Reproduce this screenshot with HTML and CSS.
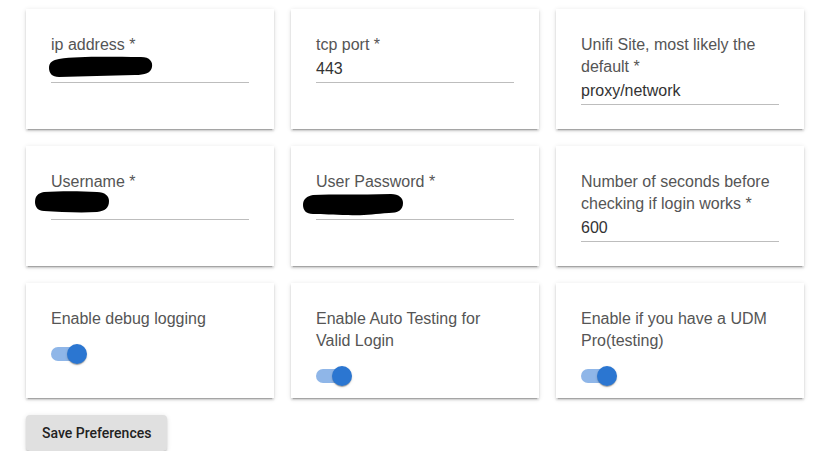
FILE: index.html
```html
<!DOCTYPE html>
<html lang="en">
<head>
  <meta charset="UTF-8">
  <meta name="viewport" content="width=device-width, initial-scale=1.0">
  <title>Preferences</title>
  <link rel="stylesheet" href="styles.css">
</head>
<body>
  <div class="prefs">
    <div class="grid">
      <div class="card">
        <label class="field-label">ip address *</label>
        <div class="field-input">
          <svg class="redact redact-ip" viewBox="0 0 104 23" width="104" height="23">
            <path d="M10 4 C30 1 60 2 92 2 C101 2 104 7 103 12 C102 18 96 20 86 20 C60 21 35 21 10 22 C3 22 0 18 0 13 C0 7 4 5 10 4 Z" fill="#000"/>
          </svg>
        </div>
      </div>
      <div class="card">
        <label class="field-label">tcp port *</label>
        <div class="field-input">443</div>
      </div>
      <div class="card">
        <label class="field-label">Unifi Site, most likely the default *</label>
        <div class="field-input">proxy/network</div>
      </div>

      <div class="card">
        <label class="field-label">Username *</label>
        <div class="field-input">
          <svg class="redact redact-user" viewBox="0 0 74 23" width="74" height="23">
            <path d="M9 2 C25 1 45 1 62 2 C70 2 74 6 74 11 C74 18 70 21 62 22 C45 23 25 22 9 21 C3 21 0 17 0 12 C0 6 3 3 9 2 Z" fill="#000"/>
          </svg>
        </div>
      </div>
      <div class="card">
        <label class="field-label">User Password *</label>
        <div class="field-input">
          <svg class="redact redact-pass" viewBox="0 0 100 23" width="100" height="23">
            <path d="M10 2 C30 1 55 2 88 1 C96 1 100 5 100 10 C100 17 95 20 86 20 C70 21 60 23 45 22 C30 22 20 21 10 21 C3 21 0 17 0 12 C0 6 4 3 10 2 Z" fill="#000"/>
          </svg>
        </div>
      </div>
      <div class="card">
        <label class="field-label">Number of seconds before checking if login works *</label>
        <div class="field-input">600</div>
      </div>

      <div class="card card-switch">
        <span class="field-label">Enable debug logging</span>
        <span class="switch"><span class="switch-track"></span><span class="switch-thumb"></span></span>
      </div>
      <div class="card card-switch">
        <span class="field-label">Enable Auto Testing for Valid Login</span>
        <span class="switch"><span class="switch-track"></span><span class="switch-thumb"></span></span>
      </div>
      <div class="card card-switch">
        <span class="field-label">Enable if you have a UDM Pro(testing)</span>
        <span class="switch"><span class="switch-track"></span><span class="switch-thumb"></span></span>
      </div>
    </div>

    <button class="save-btn">Save Preferences</button>
  </div>
</body>
</html>
```

FILE: styles.css
```css
body {
  margin: 0;
  background: #fff;
  font-family: "Liberation Sans", Arial, sans-serif;
  color: #333;
}
.prefs {
  width: 778px;
  padding: 9px 0 0 26px;
}
.grid {
  display: grid;
  grid-template-columns: repeat(3, 248px);
  gap: 17px;
}
.card {
  display: flex;
  flex-direction: column;
  padding: 25px 25px 24px;
  background: #fff;
  box-shadow: 0 3px 1px -2px rgba(0, 0, 0, 0.2), 0 2px 2px 0 rgba(0, 0, 0, 0.14), 0 1px 5px 0 rgba(0, 0, 0, 0.12);
}
.field-label {
  font-size: 16px;
  line-height: 22px;
  color: #555;
  margin-bottom: 2px;
}
.field-input {
  position: relative;
  height: 22px;
  line-height: 22px;
  font-size: 16px;
  color: #333;
  padding-bottom: 2px;
  border-bottom: 1px solid #bdbdbd;
}
.redact {
  position: absolute;
  top: -3px;
  left: -2px;
}
.redact-user {
  left: -16px;
  top: -5px;
}
.redact-pass {
  left: -13px;
  top: -2px;
}
.card-switch {
  padding-bottom: 12px;
}
.card-switch .field-label {
  margin-bottom: 0;
}
.switch {
  position: relative;
  display: block;
  width: 37px;
  height: 20px;
  margin-top: 14px;
}
.switch-track {
  position: absolute;
  left: 0;
  top: 3px;
  width: 34px;
  height: 14px;
  border-radius: 7px;
  background: #8fb6e8;
}
.switch-thumb {
  position: absolute;
  left: 16px;
  top: 0;
  width: 20px;
  height: 20px;
  border-radius: 50%;
  background: #2b76d1;
  box-shadow: 0 2px 1px -1px rgba(0, 0, 0, 0.2), 0 1px 1px 0 rgba(0, 0, 0, 0.14), 0 1px 3px 0 rgba(0, 0, 0, 0.12);
}
.save-btn {
  margin-top: 17px;
  height: 36px;
  padding: 0 16px;
  border: none;
  border-radius: 4px;
  background: #e0e0e0;
  color: #222;
  font-family: Roboto, "Liberation Sans", Arial, sans-serif;
  font-size: 14px;
  font-weight: 500;
  box-shadow: 0 3px 1px -2px rgba(0, 0, 0, 0.2), 0 2px 2px 0 rgba(0, 0, 0, 0.14), 0 1px 5px 0 rgba(0, 0, 0, 0.12);
  cursor: pointer;
}
```
